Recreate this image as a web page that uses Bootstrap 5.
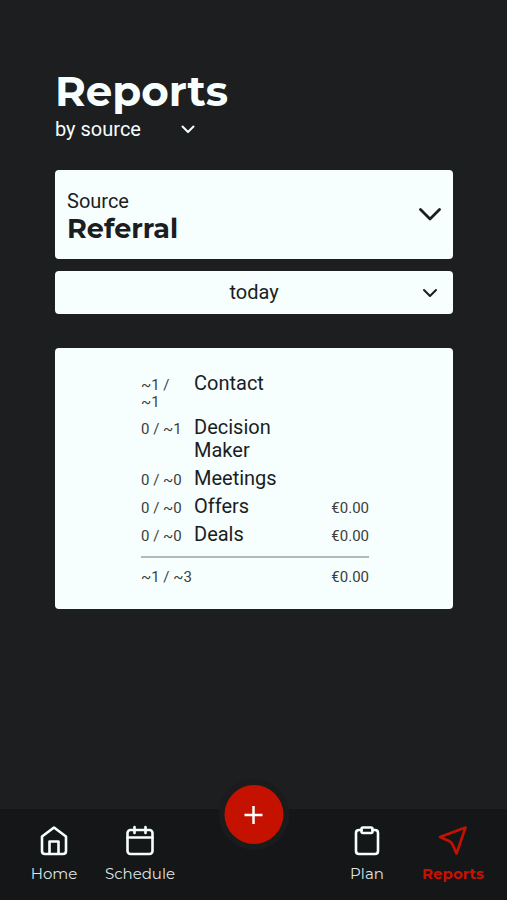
<!DOCTYPE html>
<html lang="en">
<head>
<meta charset="utf-8">
<meta name="viewport" content="width=device-width, initial-scale=1">
<title>Reports</title>
<link href="https://cdn.jsdelivr.net/npm/bootstrap@5.3.0/dist/css/bootstrap.min.css" rel="stylesheet">
<style>
:root { --ink: #1b1d1f; --paper: #f6fffe; --bar: #141618; --accent: #c51200; }
body { background: #1c1e1f; color: var(--paper); font-family: Roboto, "Liberation Sans", sans-serif; font-size: 20px; line-height: 23px; }
.display-face { font-family: Montserrat, Inter, sans-serif; }
.page-main { padding: 66px 54px 24px 55px; }
.page-title { font-size: 42px; line-height: 51px; font-weight: 700; margin: 0; }
.pick { appearance: none; border: 0; border-radius: 4px; color: inherit; background-color: transparent; background-repeat: no-repeat; cursor: pointer; }
.pick option { color: var(--ink); }
.pick-view { width: 140px; padding: 0; height: 24px; background-position: right 0 center; background-size: 14px 14px;
  background-image: url("data:image/svg+xml,%3Csvg xmlns='http://www.w3.org/2000/svg' viewBox='0 0 14 14'%3E%3Cpath d='M1.5 4.5 7 10l5.500-5.500' fill='none' stroke='%23f6fffe' stroke-width='2' stroke-linecap='round' stroke-linejoin='round'/%3E%3C/svg%3E"); }
.sheet { background: var(--paper); color: var(--ink); border-radius: 4px; }
.source-box { margin-top: 29px; padding: 14px 12px; }
.source-box label { display: block; padding-top: 6px; }
.pick-source { display: block; width: 100%; padding: 0; height: 32px; font-size: 27px; font-weight: 700; line-height: 32px; }
.source-chevron { width: 22px; height: 22px; flex: none; pointer-events: none; }
.pick-range { display: block; width: 100%; height: 43px; margin-top: 12px; padding: 0 30px; text-align-last: center; background-color: var(--paper); color: var(--ink); background-position: right 15px center; background-size: 16px 16px;
  background-image: url("data:image/svg+xml,%3Csvg xmlns='http://www.w3.org/2000/svg' viewBox='0 0 16 16'%3E%3Cpath d='M2 5l6 6 6-6' fill='none' stroke='%231b1d1f' stroke-width='2' stroke-linecap='round' stroke-linejoin='round'/%3E%3C/svg%3E"); }
.stats-box { margin-top: 34px; padding: 24px 84px 23px 86px; }
.stats { width: 100%; table-layout: fixed; }
.stats th, .stats td { padding: 0 0 5px; vertical-align: baseline; font-weight: 400; }
.stats .tally, .stats .sum { font-size: 15px; line-height: 17px; color: #3a3e40; }
.stats .sum { text-align: right; }
.stats col.c-tally { width: 53px; }
.stats col.c-sum { width: 75px; }
.stats tfoot td { border-top: 2px solid #b3baba; padding: 11px 0 0; }
.stats tbody tr:last-child > * { padding-bottom: 10px; }
.tabbar { background: var(--bar); padding: 16px 11px; font-size: 15px; line-height: 20px; }
.tab { width: 86px; color: #dfe5e4; text-decoration: none; }
.tab svg { width: 32px; height: 32px; fill: none; stroke: currentColor; stroke-width: 2.6; stroke-linecap: round; stroke-linejoin: round; color: var(--paper); }
.tab span { margin-top: 7px; }
.tab.current, .tab.current svg { color: var(--accent); }
.tab.current { font-weight: 700; }
.add-btn { position: absolute; left: 50%; top: -24px; transform: translateX(-50%); width: 59px; height: 59px; padding: 0; background: var(--accent); border: 0; box-shadow: 0 0 0 6px #191b1c; }
.add-btn:hover { background: #a90f00; }
.add-btn svg { width: 20px; height: 20px; stroke: #fff; stroke-width: 2.5; }
</style>
</head>
<body class="d-flex flex-column min-vh-100">
<main class="page-main flex-grow-1">
  <h1 class="page-title display-face">Reports</h1>
  <select class="pick pick-view" aria-label="Group reports">
    <option>by source</option>
  </select>

  <section class="sheet source-box d-flex align-items-center">
    <div class="flex-grow-1">
      <label for="source">Source</label>
      <select id="source" class="pick pick-source display-face"><option>Referral</option></select>
    </div>
    <svg class="source-chevron" viewBox="0 0 22 22" fill="none" stroke="currentColor" stroke-width="2.8" stroke-linecap="round" stroke-linejoin="round" aria-hidden="true"><path d="M1.500 5.500 11 15l9.500-9.500"/></svg>
  </section>

  <select class="pick pick-range" aria-label="Period"><option>today</option></select>

  <section class="sheet stats-box">
    <table class="stats">
      <colgroup><col class="c-tally"><col><col class="c-sum"></colgroup>
      <tbody>
        <tr><td class="tally pe-3">~1 / ~1</td><th scope="row">Contact</th><td></td></tr>
        <tr><td class="tally">0 / ~1</td><th scope="row">Decision Maker</th><td></td></tr>
        <tr><td class="tally">0 / ~0</td><th scope="row">Meetings</th><td></td></tr>
        <tr><td class="tally">0 / ~0</td><th scope="row">Offers</th><td class="sum">€0.00</td></tr>
        <tr><td class="tally">0 / ~0</td><th scope="row">Deals</th><td class="sum">€0.00</td></tr>
      </tbody>
      <tfoot>
        <tr><td class="tally" colspan="2">~1 / ~3</td><td class="sum">€0.00</td></tr>
      </tfoot>
    </table>
  </section>
</main>

<nav class="tabbar display-face d-flex position-sticky bottom-0" aria-label="Main">
  <a class="tab d-flex flex-column align-items-center" href="#home">
    <svg viewBox="0 0 32 32" aria-hidden="true"><path d="M16 2.500 4 11.500V26q0 3 3 3h18q3 0 3-3V11.500ZM11.500 29V16.500h9V29"/></svg>
    <span>Home</span>
  </a>
  <a class="tab d-flex flex-column align-items-center" href="#schedule">
    <svg viewBox="0 0 32 32" aria-hidden="true"><rect x="3.500" y="5" width="25" height="24" rx="3"/><path d="M3.500 12.500h25M10.500 2v6M21.500 2v6"/></svg>
    <span>Schedule</span>
  </a>
  <div class="flex-grow-1"></div>
  <a class="tab d-flex flex-column align-items-center" href="#plan">
    <svg viewBox="0 0 32 32" aria-hidden="true"><path d="M10.500 5H8q-3 0-3 3v18q0 3 3 3h16q3 0 3-3V8q0-3-3-3h-2.500"/><rect x="10.500" y="2.500" width="11" height="5.500" rx="1.500"/></svg>
    <span>Plan</span>
  </a>
  <a class="tab current d-flex flex-column align-items-center" href="#reports" aria-current="page">
    <svg viewBox="0 0 32 32" aria-hidden="true"><path d="M3 12 28.500 2.500 19.500 28.500 15.500 19.500Q14.500 17.200 12 16Z"/></svg>
    <span>Reports</span>
  </a>
  <button type="button" class="add-btn btn rounded-circle d-flex align-items-center justify-content-center" aria-label="Add">
    <svg viewBox="0 0 20 20" aria-hidden="true"><path d="M10 1v18M1 10h18"/></svg>
  </button>
</nav>
<script src="https://cdn.jsdelivr.net/npm/bootstrap@5.3.0/dist/js/bootstrap.bundle.min.js"></script>
</body>
</html>
